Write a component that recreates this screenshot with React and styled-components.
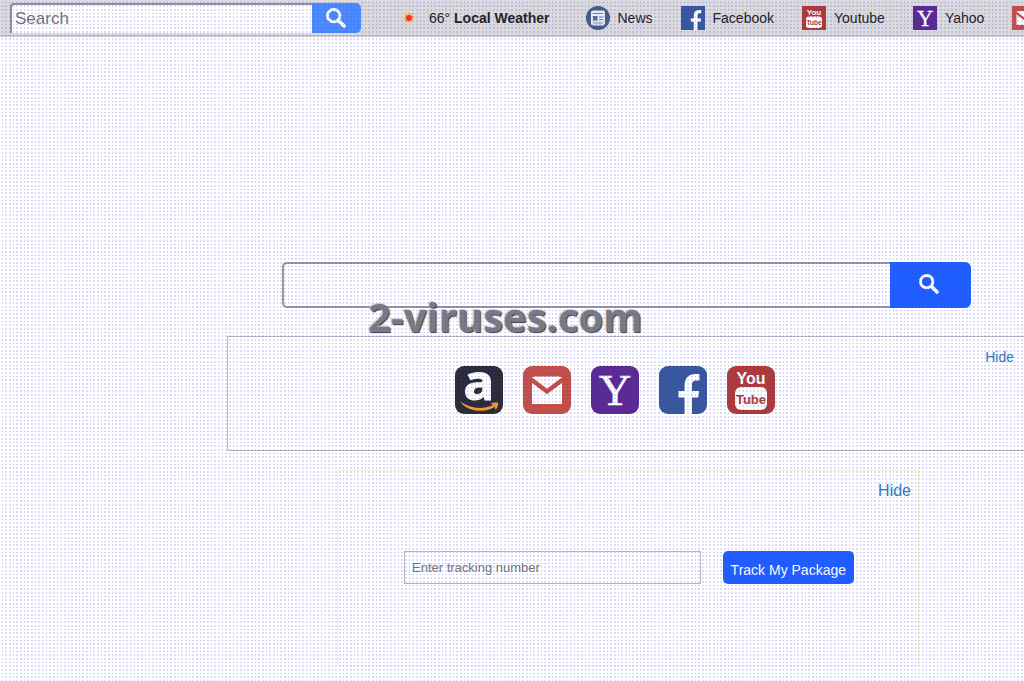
import styled, { createGlobalStyle } from "styled-components";
import { useState } from "react";

const GlobalStyle = createGlobalStyle`
  * {
    box-sizing: border-box;
  }
  body {
    margin: 0;
    background: #fff;
    color: #222;
    font-family: "Liberation Sans", Arial, sans-serif;
    overflow-x: hidden;
  }
`;

const Page = styled.div`
  position: relative;
  min-height: 100vh;
  overflow: hidden;
`;

const Toolbar = styled.header`
  display: flex;
  align-items: center;
  height: 37px;
  padding-left: 10px;
  background: #dadadd;
  border-bottom: 2px solid #c8c8cc;
  white-space: nowrap;
`;

const ToolbarSearch = styled.form`
  display: flex;
  flex: none;
  height: 30px;
  input {
    width: 302px;
    padding: 0 3px;
    border: 2px solid #8e8e96;
    border-right: 0;
    border-bottom: 0;
    border-radius: 4px 0 0 0;
    background: #fff;
    font-family: inherit;
    font-size: 17px;
    outline: 0;
  }
  input::placeholder {
    color: #757575;
  }
  button {
    display: flex;
    align-items: center;
    justify-content: center;
    width: 49px;
    padding: 0 2px 0 0;
    border: 0;
    border-radius: 0 5px 5px 0;
    background: #4a8cff;
    cursor: pointer;
  }
`;

const Weather = styled.a`
  display: flex;
  align-items: center;
  gap: 12px;
  margin: 0 36px 0 40px;
  color: #222;
  font-size: 14px;
  text-decoration: none;
`;

const ToolbarNav = styled.nav`
  display: flex;
  gap: 28px;
`;

const ToolbarLink = styled.a`
  display: flex;
  flex: none;
  align-items: center;
  gap: 8px;
  color: #222;
  font-size: 14px;
  text-decoration: none;
  &:hover {
    text-decoration: underline;
  }
`;

const SearchArea = styled.main`
  display: flex;
  justify-content: center;
  padding: 225px 53px 28px 282px;
`;

const SearchForm = styled.form`
  display: flex;
  flex: 1;
  height: 46px;
  input {
    flex: 1;
    min-width: 0;
    padding: 0 12px;
    border: 2px solid #98989f;
    border-right: 0;
    border-radius: 5px 0 0 5px;
    background: #fff;
    font-family: inherit;
    font-size: 16px;
    outline: 0;
  }
  button {
    display: flex;
    align-items: center;
    justify-content: center;
    width: 81px;
    padding: 0 4px 2px 0;
    border: 0;
    border-radius: 0 6px 6px 0;
    background: #1f5fff;
    cursor: pointer;
  }
`;

const ShortcutPanel = styled.section`
  display: flex;
  flex-direction: column;
  height: 115px;
  margin-left: 227px;
  padding: 12px 10px 0 0;
  border: 1px solid #b9b9c2;
  border-right: 0;
`;

const HideLink = styled.a`
  align-self: flex-end;
  color: #337ab7;
  font-size: ${(props) => (props.$large ? 16 : 14)}px;
  line-height: ${(props) => (props.$large ? 20 : 16)}px;
  text-decoration: none;
`;

const Shortcuts = styled.div`
  display: flex;
  justify-content: center;
  gap: 20px;
  padding: 1px 12px 0 0;
  a {
    display: block;
    height: 48px;
  }
`;

const TrackingPanel = styled.section`
  display: flex;
  flex-direction: column;
  height: 196px;
  margin: 19px 105px 0 337px;
  padding: 10px 7px 0 66px;
  border: 1px solid #f1f1e2;
`;

const TrackingForm = styled.form`
  display: flex;
  gap: 22px;
  height: 33px;
  margin: 50px 57px 0 0;
  input {
    flex: 1;
    min-width: 0;
    padding: 0 7px;
    border: 1px solid #b4b4ba;
    background: #fff;
    font-family: inherit;
    font-size: 13px;
    outline: 0;
  }
  input::placeholder {
    color: #757575;
  }
  button {
    padding: 5px 8px 0;
    border: 0;
    border-radius: 5px;
    background: #1f5fff;
    color: #fff;
    font-family: inherit;
    font-size: 14px;
    cursor: pointer;
    white-space: nowrap;
  }
`;

const Watermark = styled.div`
  position: absolute;
  top: 291px;
  left: 368px;
  color: #7b7b82;
  font-family: "Open Sans", sans-serif;
  font-size: 40px;
  font-weight: 700;
  line-height: 52px;
  text-shadow: -1px -1px 1px #d0d0d4, 1px 1px 1px #3a3a3e;
  pointer-events: none;
`;

const DotLayer = styled.svg`
  position: absolute;
  top: 0;
  left: 0;
  width: 100%;
  height: 100%;
  pointer-events: none;
`;

const SearchIcon = ({ size }) => (
  <svg width={size} height={size} viewBox="0 0 20 20" fill="none" stroke="#fff">
    <circle cx="7.7" cy="7.7" r="6.2" strokeWidth="2.8" />
    <path d="M12.500 12.500l5.500 5.500" strokeWidth="3.6" strokeLinecap="round" />
  </svg>
);

const SunIcon = () => (
  <svg width="16" height="16" viewBox="0 0 16 16">
    <path
      d="M8 1.8l1 3 2.7-2-.8 3.2 3.3.5-2.8 1.6 2.3 2.4-3.1-.3.2 3.3L8.600 11.300 7 14l-.9-3-3 1.400 1.200-2.900-2.800-1.300 3-1L3 3.600l3 1.400z"
      fill="#ffae52"
    />
    <circle cx="8" cy="8" r="3" fill="#f5331f" />
  </svg>
);

const NewsIcon = () => (
  <svg width="24" height="24" viewBox="0 0 24 24">
    <circle cx="12" cy="12" r="12" fill="#485d85" />
    <rect x="5" y="4.500" width="14" height="15" rx="2" fill="#e9ecf4" />
    <path d="M7 7.500h10M13 11h4M13 13.500h4M7 17h10" stroke="#7485a6" strokeWidth="1.200" />
    <rect x="7" y="10" width="4.500" height="4.500" fill="#566b93" />
  </svg>
);

const marks = {
  amazon: {
    color: "#2b2b38",
    art: (
      <>
        <text
          x="24"
          y="33.500"
          fill="#fff"
          stroke="#fff"
          strokeWidth="1"
          fontFamily="Open Sans, sans-serif"
          fontWeight="700"
          fontSize="51"
          textAnchor="middle"
        >
          a
        </text>
        <path
          d="M5 35.500c11 7.500 23 8 33 3.500l-2.500-1.500c2.500-1.200 5-1.300 7.500-.8.3 2.800-.5 5.200-2.500 7l-.8-2.800C28 47.500 13 46 5 35.500z"
          fill="#f79a2b"
        />
      </>
    ),
  },
  gmail: {
    color: "#c65045",
    art: (
      <>
        <path d="M9 11h30v27H9z" fill="#fff" />
        <path d="M7.500 13L24 25.500 40.500 13" fill="none" stroke="#c65045" strokeWidth="4.500" />
        <path d="M11 10.500h26L24 20z" fill="#fff" />
      </>
    ),
  },
  yahoo: {
    color: "#5b2a91",
    art: (
      <text
        x="24"
        y="39"
        fill="#fff"
        stroke="#fff"
        strokeWidth=".6"
        fontFamily="Liberation Serif, serif"
        fontSize="45"
        textAnchor="middle"
      >
        Y
      </text>
    ),
  },
  facebook: {
    color: "#37589b",
    art: (
      <path
        d="M25.500 48V31.500H19.500V25h6v-4.500c0-8.500 4-12.500 11-12.500 1.800 0 3.200.1 4 .3v6.200h-3c-3.500 0-4.500 1.800-4.500 5V25h7.200l-1 6.500H33V48z"
        fill="#fff"
      />
    ),
  },
  youtube: {
    color: "#b23a34",
    art: (
      <>
        <rect x="8" y="21" width="32" height="23" rx="6" fill="#fff" />
        <g
          fontFamily="Liberation Sans, Arial, sans-serif"
          fontWeight="700"
          textAnchor="middle"
        >
          <text x="24" y="17.500" fontSize="16" fill="#fff">
            You
          </text>
          <text x="24" y="37.500" fontSize="13" fill="#b23a34">
            Tube
          </text>
        </g>
      </>
    ),
  },
};

const SiteIcon = ({ name, size, radius = 0 }) => (
  <svg width={size} height={size} viewBox="0 0 48 48" aria-hidden="true">
    <rect width="48" height="48" rx={radius} fill={marks[name].color} />
    {marks[name].art}
  </svg>
);

const toolbarSites = [
  { name: "facebook", label: "Facebook" },
  { name: "youtube", label: "Youtube" },
  { name: "yahoo", label: "Yahoo" },
  { name: "gmail" },
];

const shortcuts = ["amazon", "gmail", "yahoo", "facebook", "youtube"];

// three dots per 11px tile, the first one sharp and the other two spread
const dots = [
  { start: 2, size: 1, strength: 0.62 },
  { start: 5, size: 2, strength: 0.42 },
  { start: 9, size: 2, strength: 0.42 },
];

const Dots = () => (
  <DotLayer aria-hidden="true">
    <defs>
      <pattern id="dots" width="11" height="11" patternUnits="userSpaceOnUse">
        {dots.map((row) =>
          dots.map((col) => (
            <rect
              key={`${col.start}-${row.start}`}
              x={col.start}
              y={row.start}
              width={col.size}
              height={row.size}
              fill="#3c3ce6"
              opacity={col.strength * row.strength}
            />
          ))
        )}
      </pattern>
    </defs>
    <rect width="100%" height="100%" fill="url(#dots)" />
  </DotLayer>
);

const App = () => {
  const [showShortcuts, setShowShortcuts] = useState(true);
  const [showTracking, setShowTracking] = useState(true);

  const hide = (setter) => (e) => {
    e.preventDefault();
    setter(false);
  };

  const handleSubmit = (e) => e.preventDefault();

  return (
    <>
      <GlobalStyle />
      <Page>
        <Toolbar>
          <ToolbarSearch onSubmit={handleSubmit}>
            <input type="text" placeholder="Search" aria-label="Search" />
            <button type="submit" aria-label="Search">
              <SearchIcon size={20} />
            </button>
          </ToolbarSearch>
          <Weather href="#weather">
            <SunIcon />
            <span>
              66° <b>Local Weather</b>
            </span>
          </Weather>
          <ToolbarNav>
            <ToolbarLink href="#news">
              <NewsIcon />
              News
            </ToolbarLink>
            {toolbarSites.map((site) => (
              <ToolbarLink
                key={site.name}
                href={`#${site.name}`}
                aria-label={site.label || site.name}
              >
                <SiteIcon name={site.name} size={24} />
                {site.label}
              </ToolbarLink>
            ))}
          </ToolbarNav>
        </Toolbar>

        <SearchArea>
          <SearchForm onSubmit={handleSubmit}>
            <input type="text" aria-label="Search the web" />
            <button type="submit" aria-label="Search the web">
              <SearchIcon size={20} />
            </button>
          </SearchForm>
        </SearchArea>

        {showShortcuts && (
          <ShortcutPanel>
            <HideLink href="#hide" onClick={hide(setShowShortcuts)}>
              Hide
            </HideLink>
            <Shortcuts>
              {shortcuts.map((name) => (
                <a key={name} href={`#${name}`} aria-label={name}>
                  <SiteIcon name={name} size={48} radius={9} />
                </a>
              ))}
            </Shortcuts>
          </ShortcutPanel>
        )}

        {showTracking && (
          <TrackingPanel>
            <HideLink $large href="#hide" onClick={hide(setShowTracking)}>
              Hide
            </HideLink>
            <TrackingForm onSubmit={handleSubmit}>
              <input
                type="text"
                placeholder="Enter tracking number"
                aria-label="Tracking number"
              />
              <button type="submit">Track My Package</button>
            </TrackingForm>
          </TrackingPanel>
        )}

        <Watermark>2-viruses.com</Watermark>
        <Dots />
      </Page>
    </>
  );
};

export default App;
